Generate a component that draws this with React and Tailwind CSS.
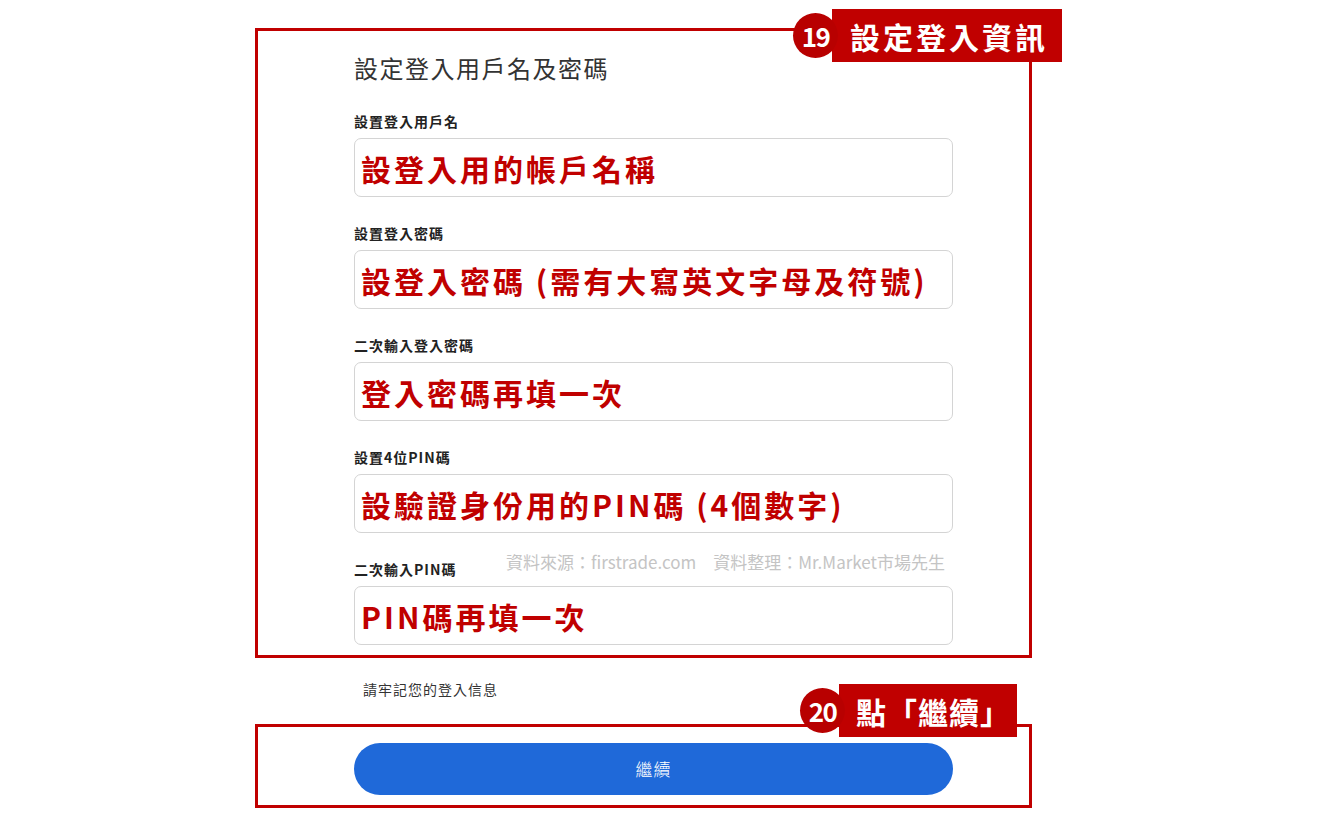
import React from "react";

const FONT = { fontFamily: '"Noto Sans CJK TC", "Noto Sans CJK SC", sans-serif' };

const fields = [
  ["設置登入用戶名", "設登入用的帳戶名稱"],
  ["設置登入密碼", "設登入密碼 (需有大寫英文字母及符號)"],
  ["二次輸入登入密碼", "登入密碼再填一次"],
  ["設置4位PIN碼", "設驗證身份用的PIN碼 (4個數字)"],
  ["二次輸入PIN碼", "PIN碼再填一次"],
];

function Badge({ num, text, className, textClass }) {
  return (
    <div className={`absolute flex items-center whitespace-nowrap ${className}`}>
      <div className="relative z-10 shrink-0 w-[45px] h-[45px] rounded-full bg-[#b80000] flex items-center justify-center text-white font-bold text-[26px] tracking-[-1.5px] leading-none">
        {num}
      </div>
      <div className={`-ml-[6px] shrink-0 h-[53px] bg-[#c00000] text-white font-bold text-[30px] flex items-center leading-none ${textClass}`}>
        {text}
      </div>
    </div>
  );
}

export default function App() {
  return (
    <div className="min-h-screen bg-white text-[#333]" style={FONT}>
      <div className="pt-[28px] pl-[255px]">
        <div className="relative w-[777px] border-[3px] border-[#c00000] pt-[21px] pl-[96px] pb-[10px]">
          <Badge num="19" text="設定登入資訊" className="left-[535px] top-[-22px]" textClass="pl-[18px] pr-[14px] tracking-[3px]" />
          <h1 className="text-[24px] leading-[32px] font-normal tracking-[1.5px] text-[#333]">設定登入用戶名及密碼</h1>
          <div className="mt-[27px] flex flex-col gap-[26px] w-[599px]">
            {fields.map(([label, value], i) => (
              <div key={label}>
                <div className="relative text-[14px] leading-[20px] font-bold tracking-[1px] text-[#222]">
                  {label}
                  {i === 4 && (
                    <span className="absolute right-[8px] top-[-7px] text-[17px] font-normal tracking-normal text-[#c4c4c4] whitespace-pre">
                      {"資料來源：firstrade.com　資料整理：Mr.Market市場先生"}
                    </span>
                  )}
                </div>
                <div className="mt-[7px] h-[59px] rounded-[7px] border border-[#d4d4d4] flex items-center pl-[6px]">
                  <span className="text-[#c00000] font-bold text-[30px] leading-none tracking-[3px]">{value}</span>
                </div>
              </div>
            ))}
          </div>
        </div>
        <p className="mt-[21px] ml-[108px] text-[14px] leading-[20px] tracking-[1px] text-[#333]">請牢記您的登入信息</p>
        <div className="relative mt-[25px] w-[777px] border-[3px] border-[#c00000] pt-[16px] pb-[10px] pl-[96px]">
          <Badge num="20" text="點「繼續」" className="left-[542px] top-[-43px]" textClass="pl-[17px] pr-[6px] tracking-[1px]" />
          <button className="w-[599px] h-[52px] rounded-full bg-[#1f69d9] text-white text-[17px] font-light tracking-[1px]">
            繼續
          </button>
        </div>
      </div>
    </div>
  );
}
